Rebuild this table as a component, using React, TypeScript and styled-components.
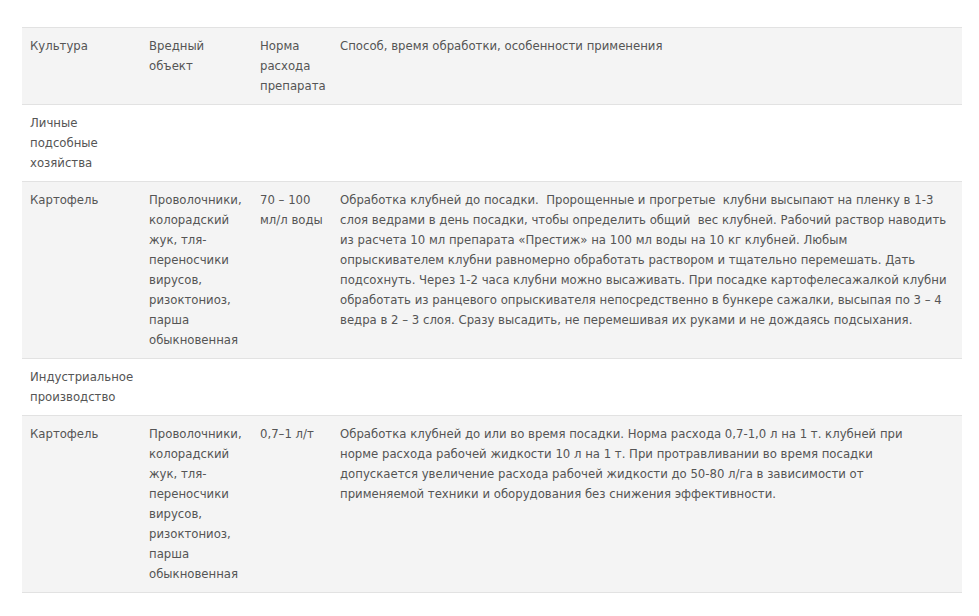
import React from "react";
import styled, { createGlobalStyle } from "styled-components";

const Global = createGlobalStyle`
  html, body { margin: 0; padding: 0; background: #ffffff; }
  body { font-family: "DejaVu Sans Condensed", "DejaVu Sans", Verdana, sans-serif; }
`;

const Page = styled.div`
  padding: 27px 0 0 22px;
`;

const Table = styled.table`
  width: 940px;
  border-collapse: collapse;
  table-layout: fixed;
  font-size: 13px;
  line-height: 20px;
  color: #555555;
  border-bottom: 1px solid #e2e2e2;
`;

const Col = styled.col<{ $w: number }>`
  width: ${(p) => p.$w}px;
`;

const Row = styled.tr<{ $shade?: boolean }>`
  background: ${(p) => (p.$shade ? "#f4f4f4" : "#ffffff")};
  border-top: 1px solid #e2e2e2;
`;

const Cell = styled.td`
  padding: 8px;
  vertical-align: top;
  text-align: left;
  font-weight: normal;
`;

const HeadCell = styled(Cell).attrs({ as: "th" })``;

const Method = styled.div<{ $max?: number }>`
  max-width: ${(p) => (p.$max ? `${p.$max}px` : "none")};
`;

type Entry = {
  crop: string;
  pest: string;
  rate: string;
  method: string;
  methodMax?: number;
};

const entries1: Entry = {
  crop: "Картофель",
  pest: "Проволочники, колорадский жук, тля-переносчики вирусов, ризоктониоз, парша обыкновенная",
  rate: "70 – 100 мл/л воды",
  method:
    "Обработка клубней до посадки.\u00a0 Пророщенные и прогретые\u00a0 клубни высыпают на пленку в 1-3 слоя ведрами в день посадки, чтобы определить общий\u00a0 вес клубней. Рабочий раствор наводить из расчета 10 мл препарата «Престиж» на 100 мл воды на 10 кг клубней. Любым опрыскивателем клубни равномерно обработать раствором и тщательно перемешать. Дать подсохнуть. Через 1-2 часа клубни можно высаживать. При посадке картофелесажалкой клубни обработать из ранцевого опрыскивателя непосредственно в бункере сажалки, высыпая по 3 – 4 ведра в 2 – 3 слоя. Сразу высадить, не перемешивая их руками и не дождаясь подсыхания.",
};

const entries2: Entry = {
  crop: "Картофель",
  pest: "Проволочники, колорадский жук, тля-переносчики вирусов, ризоктониоз, парша обыкновенная",
  rate: "0,7–1 л/т",
  method:
    "Обработка клубней до или во время посадки. Норма расхода 0,7-1,0 л на 1 т. клубней при норме расхода рабочей жидкости 10 л на 1 т. При протравливании во время посадки допускается увеличение расхода рабочей жидкости до 50-80 л/га в зависимости от применяемой техники и оборудования без снижения эффективности.",
  methodMax: 595,
};

const DataRow: React.FC<{ e: Entry }> = ({ e }) => (
  <Row $shade>
    <Cell>{e.crop}</Cell>
    <Cell>{e.pest}</Cell>
    <Cell>{e.rate}</Cell>
    <Cell>
      <Method $max={e.methodMax}>{e.method}</Method>
    </Cell>
  </Row>
);

const SectionRow: React.FC<{ title: string }> = ({ title }) => (
  <Row>
    <Cell>{title}</Cell>
    <Cell />
    <Cell />
    <Cell />
  </Row>
);

export default function App() {
  return (
    <>
      <Global />
      <Page>
        <Table>
          <colgroup>
            <Col $w={119} />
            <Col $w={111} />
            <Col $w={80} />
            <Col $w={630} />
          </colgroup>
          <thead>
            <Row $shade>
              <HeadCell>Культура</HeadCell>
              <HeadCell>Вредный объект</HeadCell>
              <HeadCell>Норма расхода препарата</HeadCell>
              <HeadCell>Способ, время обработки, особенности применения</HeadCell>
            </Row>
          </thead>
          <tbody>
            <SectionRow title="Личные подсобные хозяйства" />
            <DataRow e={entries1} />
            <SectionRow title="Индустриальное производство" />
            <DataRow e={entries2} />
          </tbody>
        </Table>
      </Page>
    </>
  );
}
